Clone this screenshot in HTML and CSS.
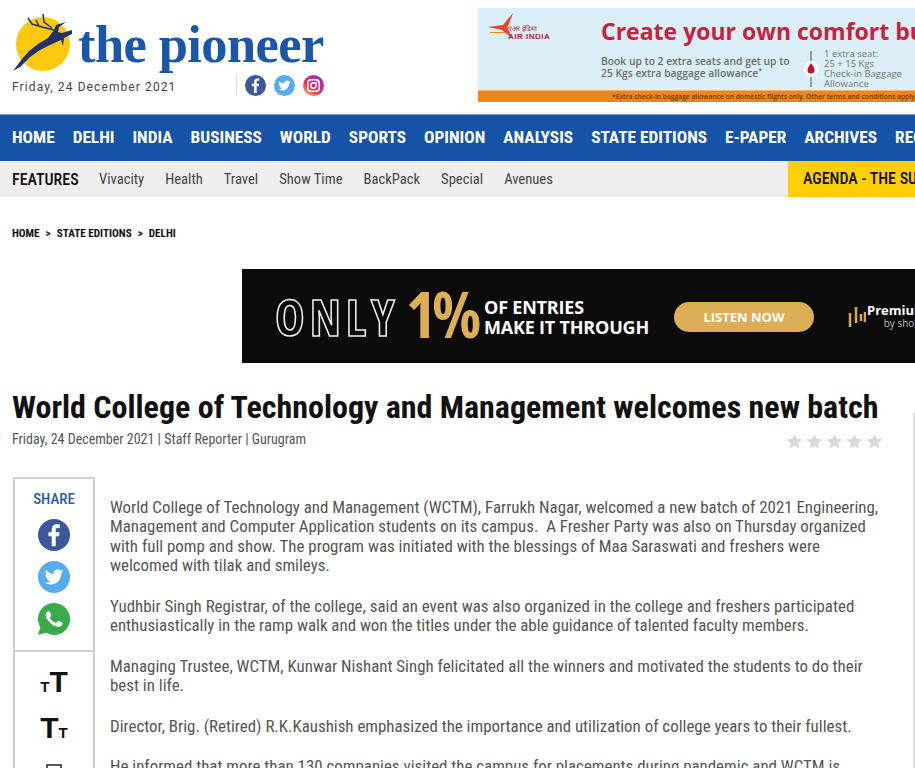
FILE: index.html
```html
<!DOCTYPE html>
<html lang="en">
<head>
<meta charset="utf-8">
<title>World College of Technology and Management welcomes new batch</title>
<link rel="stylesheet" href="styles.css">
</head>
<body>
<svg class="defs" width="0" height="0" aria-hidden="true">
  <defs>
    <symbol id="i-fb" viewBox="0 0 24 24"><circle cx="12" cy="12" r="12" fill="#3b5998"/><path fill="#fff" d="M13.3 20.5v-7.600h2.500l.4-3h-2.900V8.100c0-.9.300-1.400 1.500-1.400h1.500V4c-.3 0-1.200-.1-2.200-.1-2.200 0-3.800 1.400-3.800 3.900v2.100H7.800v3h2.500v7.600z"/></symbol>
    <symbol id="i-tw" viewBox="0 0 24 24"><circle cx="12" cy="12" r="12" fill="#55acee"/><path fill="#fff" transform="translate(5 5) scale(.58)" d="M23.953 4.57a10 10 0 01-2.825.775 4.958 4.958 0 002.163-2.723c-.951.555-2.005.959-3.127 1.184a4.92 4.92 0 00-8.384 4.482C7.69 8.095 4.067 6.13 1.64 3.162a4.822 4.822 0 00-.666 2.475c0 1.71.87 3.213 2.188 4.096a4.904 4.904 0 01-2.228-.616v.06a4.923 4.923 0 003.946 4.827 4.996 4.996 0 01-2.212.085 4.936 4.936 0 004.604 3.417 9.867 9.867 0 01-6.102 2.105c-.39 0-.779-.023-1.17-.067a13.995 13.995 0 007.557 2.209c9.053 0 13.998-7.496 13.998-13.985 0-.21 0-.42-.015-.63A9.935 9.935 0 0024 4.59z"/></symbol>
    <symbol id="i-wa" viewBox="0 0 24 24"><path fill="#3aaa4a" d="M12 0a12 12 0 0 0-10.300 18.100L0 24l6.100-1.600A12 12 0 1 0 12 0z"/><path fill="#fff" transform="translate(-.5 -.5) scale(1.04)" d="M17.472 14.382c-.297-.149-1.758-.867-2.03-.967-.273-.099-.471-.148-.67.15-.197.297-.767.966-.94 1.164-.173.199-.347.223-.644.075-.297-.15-1.255-.463-2.39-1.475-.883-.788-1.48-1.761-1.653-2.059-.173-.297-.018-.458.13-.606.134-.133.298-.347.446-.52.149-.174.198-.298.298-.497.099-.198.05-.371-.025-.52-.075-.149-.669-1.612-.916-2.207-.242-.579-.487-.5-.669-.51-.173-.008-.371-.01-.57-.01-.198 0-.52.074-.792.372-.272.297-1.04 1.016-1.04 2.479 0 1.462 1.065 2.875 1.213 3.074.149.198 2.096 3.2 5.077 4.487.709.306 1.262.489 1.694.625.712.227 1.36.195 1.871.118.571-.085 1.758-.719 2.006-1.413.248-.694.248-1.289.173-1.413-.074-.124-.272-.198-.57-.347z"/></symbol>
    <linearGradient id="ig" x1="0.15" y1="1" x2="0.85" y2="0"><stop offset="0" stop-color="#fdc04a"/><stop offset=".4" stop-color="#ee2a5f"/><stop offset=".75" stop-color="#c22aa3"/><stop offset="1" stop-color="#5b4fd0"/></linearGradient>
    <symbol id="i-ig" viewBox="0 0 24 24"><circle cx="12" cy="12" r="12" fill="url(#ig)"/><rect x="5.500" y="5.500" width="13" height="13" rx="3.600" fill="none" stroke="#fff" stroke-width="1.700"/><circle cx="12" cy="12" r="3.100" fill="none" stroke="#fff" stroke-width="1.700"/><circle cx="15.900" cy="8.100" r=".9" fill="#fff"/></symbol>
    <symbol id="i-star" viewBox="0 0 20 20"><path fill="#d9d9d9" d="M10 1.200l2.700 5.700 6.200.8-4.600 4.300 1.200 6.200L10 15.100l-5.500 3.100 1.200-6.200L1.100 7.700l6.200-.8z"/></symbol>
  </defs>
</svg>

<header class="masthead">
  <div class="brand">
    <div class="logo">
      <svg class="logo-mark" viewBox="0 0 70 70" width="70" height="70" aria-hidden="true">
        <circle cx="31" cy="31" r="27" fill="#fdc90f"/>
        <path fill="#24306e" d="M1 58l9-12 7-8 9-7 10-6 6-8 2-5 10-3-7 5-1 5 4 1 10-3v4l-8 4-1 8-2-6-11 5-10 5-10 7-10 10z"/>
        <path fill="none" stroke="#24306e" stroke-width="1.500" d="M16 5l4 6 10 3 12 3M31 1l1 8 8 6M24 7l3 6"/>
      </svg>
      <span class="logo-word">the pioneer</span>
    </div>
    <div class="brand-foot">
      <span class="date">Friday, 24 December 2021</span>
      <div class="social">
        <svg class="soc"><use href="#i-fb"/></svg>
        <svg class="soc"><use href="#i-tw"/></svg>
        <svg class="soc"><use href="#i-ig"/></svg>
      </div>
    </div>
  </div>

  <aside class="ad-air">
    <div class="ad-air-main">
      <div class="ad-air-logo">
        <svg viewBox="0 0 66 34" width="66" height="34" aria-hidden="true">
          <path fill="#e8452c" d="M25 0L15 12 0 14l14 3 10 8-5-11 2-3z"/>
          <path fill="#f18a2e" d="M2 19h16v1H2z"/>
        </svg>
        <div class="ad-air-name"><span>एअर इंडिया</span><b>AIR INDIA</b></div>
      </div>
      <div class="ad-air-copy">
        <h2 class="ad-air-title">Create your own comfort bubble</h2>
        <div class="ad-air-row">
          <p class="ad-air-offer">Book up to 2 extra seats and get up to<br>25 Kgs extra baggage allowance<sup>*</sup></p>
          <svg class="ad-air-pin" viewBox="0 0 16 36" width="16" height="36" aria-hidden="true">
            <path stroke="#555" d="M8 0v10M8 26v10"/><circle cx="8" cy="18" r="7.500" fill="#fff"/><path fill="#c8102e" d="M8 12c-2 3-3.500 5-3.500 7a3.500 3.500 0 0 0 7 0c0-2-1.500-4-3.500-7z"/>
          </svg>
          <p class="ad-air-seat">1 extra seat:<br>25 + 15 Kgs<br>Check-in Baggage<br>Allowance</p>
        </div>
      </div>
    </div>
    <div class="ad-air-strip">*Extra check-in baggage allowance on domestic flights only. Other terms and conditions apply.</div>
  </aside>
</header>

<nav class="nav">
  <a>HOME</a><a>DELHI</a><a>INDIA</a><a>BUSINESS</a><a>WORLD</a><a>SPORTS</a><a>OPINION</a><a>ANALYSIS</a><a>STATE EDITIONS</a><a>E-PAPER</a><a>ARCHIVES</a><a>RECIPES</a>
</nav>

<div class="subnav">
  <strong class="subnav-head">FEATURES</strong>
  <div class="subnav-links">
    <a>Vivacity</a><a>Health</a><a>Travel</a><a>Show Time</a><a>BackPack</a><a>Special</a><a>Avenues</a>
  </div>
  <div class="ticker">AGENDA - THE SUNDAY PIONEER</div>
</div>

<div class="crumbs"><a>HOME</a><i>&gt;</i><a>STATE EDITIONS</a><i>&gt;</i><a>DELHI</a></div>

<aside class="ad-pod">
  <span class="ad-only">ONLY</span>
  <span class="ad-pct">1%</span>
  <span class="ad-line">OF ENTRIES<br>MAKE IT THROUGH</span>
  <span class="ad-btn">LISTEN NOW</span>
  <svg class="ad-bars" viewBox="0 0 18 22" width="18" height="22" aria-hidden="true">
    <path stroke="#dba94a" stroke-width="2.500" d="M2 7v14M8 1v16M13 8v7M17 6v10"/>
  </svg>
  <span class="ad-prem"><b>Premium</b><small>by shorts</small></span>
</aside>

<main class="story">
  <div class="story-main">
    <h1 class="headline">World College of Technology and Management welcomes new batch</h1>
    <div class="meta-row">
      <span class="meta">Friday, 24 December 2021 | Staff Reporter | Gurugram</span>
      <div class="stars">
        <svg class="star"><use href="#i-star"/></svg>
        <svg class="star"><use href="#i-star"/></svg>
        <svg class="star"><use href="#i-star"/></svg>
        <svg class="star"><use href="#i-star"/></svg>
        <svg class="star"><use href="#i-star"/></svg>
      </div>
    </div>
    <div class="story-body">
      <div class="tools">
        <div class="share">
          <span class="share-label">SHARE</span>
          <svg class="share-ic"><use href="#i-fb"/></svg>
          <svg class="share-ic"><use href="#i-tw"/></svg>
          <svg class="share-ic"><use href="#i-wa"/></svg>
        </div>
        <div class="sizer">
          <span class="size-btn"><small>T</small>T</span>
          <span class="size-btn">T<small>T</small></span>
          <svg class="print" viewBox="0 0 18 12" width="18" height="12" aria-hidden="true"><path fill="none" stroke="#222" stroke-width="1.500" d="M2 10V2h14v8"/></svg>
        </div>
      </div>
      <article class="copy">
        <p>World College of Technology and Management (WCTM), Farrukh Nagar, welcomed a new batch of 2021 Engineering, Management and Computer Application students on its campus.&nbsp; A Fresher Party was also on Thursday organized with full pomp and show. The program was initiated with the blessings of Maa Saraswati and freshers were welcomed with tilak and smileys.</p>
        <p>Yudhbir Singh Registrar, of the college, said an event was also organized in the college and freshers participated enthusiastically in the ramp walk and won the titles under the able guidance of talented faculty members.</p>
        <p>Managing Trustee, WCTM, Kunwar Nishant Singh felicitated all the winners and motivated the students to do their best in life.</p>
        <p>Director, Brig. (Retired) R.K.Kaushish emphasized the importance and utilization of college years to their fullest.</p>
        <p>He informed that more than 130 companies visited the campus for placements during pandemic and WCTM is</p>
      </article>
    </div>
  </div>
  <div class="rail"></div>
</main>
</body>
</html>
```
FILE: styles.css
```css
* { box-sizing: border-box; }
html, body { height: 768px; overflow: hidden; }
body { margin: 0; background: #fff; color: #111; font-family: "Roboto", "Liberation Sans", sans-serif; font-stretch: 75%; }
p, h1, h2 { margin: 0; }
.defs { position: absolute; }

.masthead { display: flex; height: 114px; padding-top: 8px; }
.brand { width: 478px; flex: none; padding: 5px 0 0 12px; }
.logo { display: flex; align-items: flex-start; height: 60px; }
.logo-mark { flex: none; }
.logo-word { font-family: "Liberation Serif", serif; font-weight: 700; font-stretch: 100%; font-size: 52.500px; line-height: 56px; color: #1b57a8; margin: 3px 0 0 -4px; letter-spacing: -.6px; white-space: nowrap; }
.brand-foot { display: flex; align-items: center; height: 24px; }
.date { font-stretch: 100%; font-size: 12px; letter-spacing: 1.100px; color: #444; width: 224px; white-space: nowrap; padding-top: 3px; }
.social { display: flex; gap: 8px; border-left: 1px solid #ddd; padding-left: 8px; height: 22px; align-items: center; }
.soc { width: 21px; height: 21px; }

.ad-air { flex: 1; min-width: 0; height: 94px; background: #d9eef5; overflow: hidden; display: flex; flex-direction: column; font-family: "Open Sans", sans-serif; font-stretch: 100%; }
.ad-air-main { flex: 1; display: flex; min-height: 0; }
.ad-air-logo { width: 123px; flex: none; padding: 5px 0 0 10px; position: relative; }
.ad-air-name { position: absolute; left: 30px; top: 17px; font-size: 7px; line-height: 8px; color: #b3263a; font-family: "Liberation Sans", sans-serif; display: flex; flex-direction: column; white-space: nowrap; }
.ad-air-name b { font-size: 8px; letter-spacing: .5px; }
.ad-air-copy { flex: 1; min-width: 0; }
.ad-air-title { font-weight: 700; font-size: 23px; line-height: 30px; color: #c8203f; margin-top: 8px; white-space: nowrap; }
.ad-air-row { display: flex; align-items: center; margin-top: 3px; }
.ad-air-offer { font-weight: 600; font-size: 10.300px; line-height: 12px; color: #6c6c6c; width: 202px; flex: none; white-space: nowrap; margin-top: -4px; }
.ad-air-offer sup { font-size: 7px; line-height: 0; }
.ad-air-pin { flex: none; margin-right: 5px; }
.ad-air-seat { font-size: 9.500px; line-height: 10px; color: #777; white-space: nowrap; }
.ad-air-strip { height: 12px; background: #ef8519; border-top: 1px solid #f5b36b; font-size: 6.700px; font-weight: 600; line-height: 11px; color: #6b3a08; padding-left: 134px; white-space: nowrap; }

.nav { display: flex; gap: 18px; height: 47px; padding: 0 0 2px 12px; align-items: center; background: #1553a6; border-top: 1px solid #7d9cc6; overflow: hidden; }
.nav a { color: #fff; font-weight: 700; font-size: 17.300px; white-space: nowrap; flex: none; }

.subnav { display: flex; align-items: center; height: 36px; background: #eee; padding-left: 12px; overflow: hidden; }
.subnav-head { width: 87px; flex: none; font-size: 16px; font-weight: 500; color: #111; white-space: nowrap; }
.subnav-links { display: flex; gap: 21px; width: 689px; flex: none; }
.subnav-links a { font-size: 14.600px; color: #444; white-space: nowrap; }
.ticker { flex: 1; min-width: 0; align-self: stretch; background: #ffd000; padding-left: 15px; font-size: 16px; font-weight: 500; line-height: 36px; white-space: nowrap; color: #111; overflow: hidden; }

.crumbs { display: flex; gap: 6px; padding: 30px 0 0 12px; height: 72px; font-size: 11.200px; font-weight: 700; color: #111; }
.crumbs i { font-style: normal; }

.ad-pod { display: flex; align-items: center; height: 94px; margin-left: 242px; padding: 2px 0 0 33px; background: #0b0b0b; color: #fff; overflow: hidden; font-family: "Open Sans", sans-serif; font-stretch: 100%; white-space: nowrap; }
.ad-only { font-size: 50px; line-height: 60px; font-weight: 700; font-stretch: 85%; color: transparent; -webkit-text-stroke: 1.500px #eee; letter-spacing: 5px; width: 131px; flex: none; }
.ad-pct { font-size: 64px; line-height: 70px; font-weight: 700; font-stretch: 75%; color: #dcae55; margin-top: -6px; letter-spacing: -4px; width: 78px; flex: none; }
.ad-line { font-size: 18px; font-weight: 700; line-height: 20px; width: 190px; flex: none; letter-spacing: -.2px; }
.ad-btn { width: 140px; height: 30px; border-radius: 15px; background: #dcae55; text-align: center; font-size: 13px; font-weight: 700; line-height: 30px; flex: none; margin-right: 34px; }
.ad-bars { flex: none; margin-right: 1px; }
.ad-prem { display: flex; flex-direction: column; align-items: flex-end; font-size: 13px; line-height: 13px; }
.ad-prem small { font-size: 10px; color: #bbb; }

.story { display: flex; }
.story-main { width: 913px; flex: none; padding-left: 12px; }
.rail { flex: 1; border-left: 2px solid #ddd; margin-top: 50px; height: 400px; }
.headline { font-size: 32px; line-height: 38px; font-weight: 700; color: #111; margin-top: 25px; white-space: nowrap; }
.meta-row { display: flex; justify-content: space-between; align-items: center; height: 24px; margin-top: 1px; padding-right: 30px; }
.meta { font-size: 14px; color: #555; }
.stars { display: flex; gap: 3px; margin-top: 4px; }
.star { width: 17px; height: 17px; }

.story-body { display: flex; margin-top: 26px; }
.tools { width: 82px; flex: none; border: 2px solid #d0d0d0; border-bottom: 0; margin: 0 15px 0 1px; height: 400px; }
.share { display: flex; flex-direction: column; align-items: center; gap: 10px; height: 173px; padding-top: 13px; border-bottom: 2px solid #d0d0d0; }
.share-label { font-size: 15px; font-weight: 500; color: #2d5ca8; height: 14px; line-height: 14px; margin-bottom: 3px; }
.share-ic { width: 32px; height: 32px; }
.sizer { display: flex; flex-direction: column; align-items: center; gap: 16px; padding-top: 15px; }
.size-btn { font-family: "Liberation Sans", sans-serif; font-stretch: 100%; font-weight: 700; font-size: 30px; line-height: 30px; color: #111; }
.size-btn small { font-size: 15px; line-height: 0; }
.print { margin-top: 4px; }

.copy { width: 778px; padding-top: 20.500px; font-size: 16.900px; line-height: 19.500px; color: #555; }
.copy p { margin-bottom: 21px; }
```
